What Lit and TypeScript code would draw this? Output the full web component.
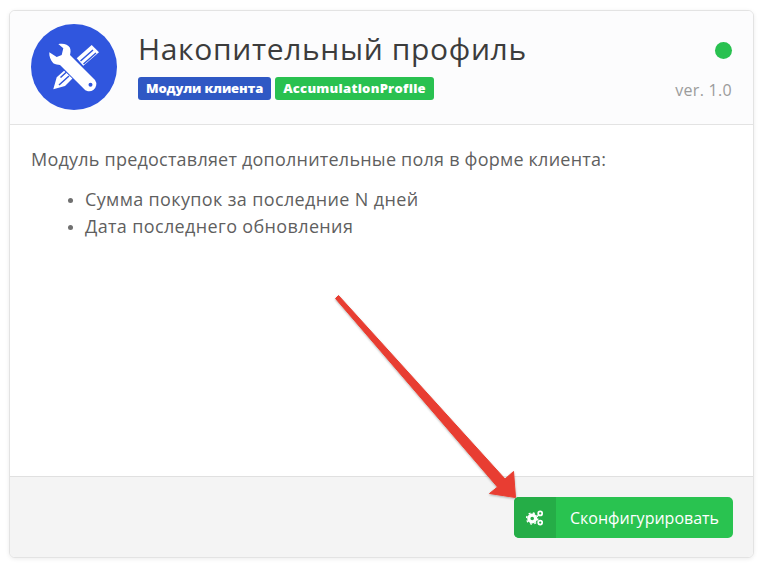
import { LitElement, html, css } from "lit";
import { customElement } from "lit/decorators.js";

@customElement("app-root")
export class AppRoot extends LitElement {
  static styles = css`
    :host { display: block; width: 763px; height: 568px; background: #fff; position: relative; font-family: "Open Sans", "Noto Sans", sans-serif; overflow: hidden; }
    .page { padding: 10px 9px 10px 9px; height: 568px; box-sizing: border-box; display: flex; }
    .card { flex: 1; display: flex; flex-direction: column; border: 1px solid #e3e3e3; border-radius: 6px; overflow: hidden; box-shadow: 0 1px 4px rgba(0,0,0,.08); background: #fff; }
    .head { height: 114px; box-sizing: border-box; background: #fcfcfd; border-bottom: 1px solid #e3e3e3; display: flex; padding: 13px 21px 0 21px; }
    .logo { width: 86px; height: 86px; border-radius: 50%; background: #3056de; flex: none; display: flex; align-items: center; justify-content: center; }
    .mid { margin-left: 21px; flex: 1; }
    .title { font-size: 30px; line-height: 40px; color: #3c3c3c; margin-top: 5px; letter-spacing: 0.65px; }
    .tags { display: flex; gap: 4px; margin-top: 8px; }
    .tag { height: 23px; line-height: 22px; padding: 0 8px; border-radius: 3px; font-size: 13px; font-weight: 800; color: #fff; }
    .tag.blue { background: #2f58c4; letter-spacing: -0.14px; }
    .tag.green { background: #29c150; letter-spacing: 0.26px; }
    .right { display: flex; flex-direction: column; align-items: flex-end; }
    .dot { width: 17px; height: 17px; border-radius: 50%; background: #29c150; margin-top: 18px; }
    .ver { font-size: 16px; color: #9b9b9b; margin-top: 20px; line-height: 22px; letter-spacing: 0.3px; }
    .body { flex: 1; padding: 21px 21px 0 21px; color: #5f5f5f; font-size: 18px; line-height: 27px; letter-spacing: 0.22px; }
    .body p { margin: 0 0 13px; }
    .body ul { margin: 0; padding: 0 0 0 54px; letter-spacing: 0.36px; }
    .body li::marker { font-size: 14px; color: #707070; }
    .foot { height: 81px; box-sizing: border-box; background: #f4f4f4; border-top: 1px solid #e0e0e0; display: flex; justify-content: flex-end; padding: 20px 20px 0 0; }
    .btn { width: 219px; height: 41px; border-radius: 5px; background: #29c350; color: #fff; display: flex; overflow: hidden; font-size: 16px; align-items: stretch; }
    .btn .ic { width: 42px; background: #25ad47; display: flex; align-items: center; justify-content: center; }
    .btn .lb { flex: 1; display: flex; align-items: center; padding-left: 14px; }
    .arrow { position: absolute; left: 0; top: 0; pointer-events: none; }
  `;
  render() {
    return html`
      <div class="page"><div class="card">
        <div class="head">
          <div class="logo">
            <svg width="86" height="86" viewBox="0 0 86 86">
              <g fill="#fff">
                <path d="M45.7 34.3 L60.7 21 L68 28.3 L52.3 41.7 Z"/>
                <path d="M22.3 65.3 L25.7 53.3 L33 46.7 L41.7 54.3 L34 62 Z"/>
              </g>
              <g stroke="#3056de" stroke-width="1.5" fill="none">
                <path d="M49.5 37 L62 26 M52.5 40 L65 29"/>
                <path d="M29.5 53.5 L35.5 48 M28 61 L38 52"/>
              </g>
              <path fill="#fff" stroke="#3056de" stroke-width="1.6" paint-order="stroke" d="M27.3 20 C32 19 37 20 38.8 23.5 C40 26 39.5 29 39 31 L64 56 A6.9 6.9 0 0 1 52.3 64.3 L29 41 C27 41 24.5 40.5 22.3 39.3 C19.5 36.5 18 32 18.3 28.3 L25.7 33 L30.7 31 L32.3 24.3 Z"/>
              <circle cx="59.5" cy="60.8" r="2" fill="#3056de"/>
            </svg>
          </div>
          <div class="mid">
            <div class="title">Накопительный профиль</div>
            <div class="tags"><span class="tag blue">Модули клиента</span><span class="tag green">AccumulationProfile</span></div>
          </div>
          <div class="right"><div class="dot"></div><div class="ver">ver. 1.0</div></div>
        </div>
        <div class="body">
          <p>Модуль предоставляет дополнительные поля в форме клиента:</p>
          <ul><li>Сумма покупок за последние N дней</li><li>Дата последнего обновления</li></ul>
        </div>
        <div class="foot">
          <div class="btn">
            <div class="ic"><svg width="18" height="16" viewBox="0 0 18 16"><g fill="none" stroke="#fff"><circle cx="6.2" cy="8.5" r="3.4" stroke-width="3.2"/><circle cx="6.2" cy="8.5" r="5.6" stroke-width="1.4" stroke-dasharray="2 2.4"/><circle cx="14.2" cy="3.4" r="2" stroke-width="1.7"/><circle cx="14.2" cy="12.6" r="2" stroke-width="1.7"/></g></svg></div>
            <div class="lb">Сконфигурировать</div>
          </div>
        </div>
      </div></div>
      <svg class="arrow" width="763" height="568" viewBox="0 0 763 568">
        <defs><filter id="s" x="-10%" y="-10%" width="120%" height="120%"><feDropShadow dx="0" dy="1" stdDeviation="1.2" flood-color="#000" flood-opacity=".3"/></filter></defs>
        <path filter="url(#s)" fill="#e83e30" stroke="#e83e30" stroke-width="1" stroke-linejoin="round" d="M335.5 298.5 L338.5 295.5 L505 479 L513.5 471.5 L515.5 497.5 L489.5 493.5 L497.5 487 Z"/>
      </svg>`;
  }
}
